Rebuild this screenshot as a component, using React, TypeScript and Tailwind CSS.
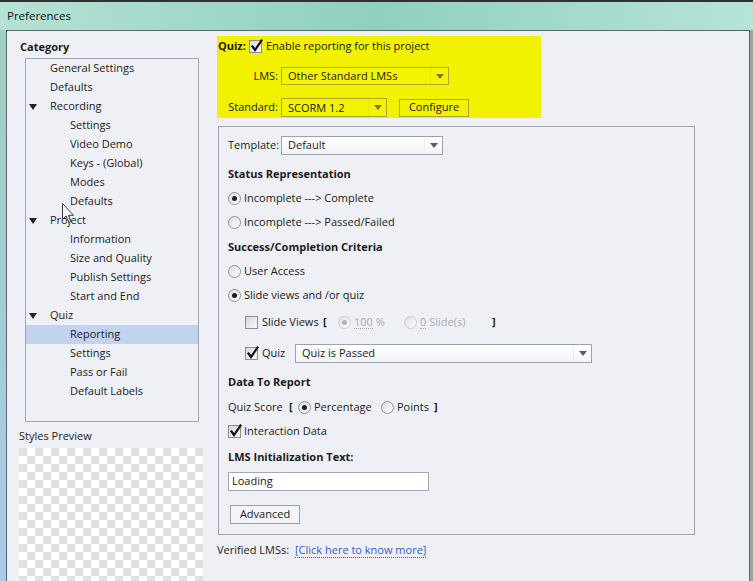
import React from "react";

function Radio({ checked = false, disabled = false }: { checked?: boolean; disabled?: boolean }) {
  return (
    <span
      className={
        "relative inline-flex w-[13px] h-[13px] shrink-0 items-center justify-center rounded-full border bg-gradient-to-br from-[#dcdde0] to-[#ffffff] " +
        (disabled ? "border-[#c9ccd2]" : "border-[#8c919b]")
      }
    >
      {checked && (
        <span className={"block w-[5px] h-[5px] rounded-full " + (disabled ? "bg-[#b3b5ba]" : "bg-[#1c1c1c]")} />
      )}
    </span>
  );
}

function Check({ checked = false }: { checked?: boolean }) {
  return (
    <span className="relative inline-block w-[13px] h-[13px] shrink-0 border border-[#8a8d94] bg-gradient-to-br from-[#d6d7da] to-[#fbfbfb]">
      {checked && (
        <svg className="absolute left-[0px] top-[-2px]" width="13" height="14" viewBox="0 0 13 14">
          <path d="M2.5 7.5 L5 11 L11.5 1.5" fill="none" stroke="#111" strokeWidth="2.2" strokeLinecap="square" />
        </svg>
      )}
    </span>
  );
}

function Arrow({ color = "#555" }: { color?: string }) {
  return (
    <svg width="8" height="5" viewBox="0 0 8 5">
      <path d="M0 0 H8 L4 5 Z" fill={color} />
    </svg>
  );
}

function Drop({ text, w, yellow = false, h = "h-[19px]" }: { text: string; w: string; yellow?: boolean; h?: string }) {
  return (
    <div
      className={
        "flex items-center border " +
        h +
        " " +
        w +
        (yellow
          ? " border-[#a9a92c] bg-[#f4f400]"
          : " border-[#9ba1ae] bg-gradient-to-b from-[#ffffff] to-[#f3f4f7]")
      }
    >
      <span className="flex-1 pl-[6px] whitespace-nowrap leading-[14px]">{text}</span>
      <span className={"h-full w-px " + (yellow ? "bg-[#e6e600]" : "bg-[#eceef2]")} />
      <span className="w-[17px] flex items-center justify-center">
        <Arrow color={yellow ? "#7a7a30" : "#5a5d66"} />
      </span>
    </div>
  );
}

function Tri() {
  return (
    <svg width="8" height="6" viewBox="0 0 8 6">
      <path d="M0 0 H8 L4 6 Z" fill="#222" />
    </svg>
  );
}

type TreeItem = { label: string; level: 1 | 2; open?: boolean; selected?: boolean };

const tree: TreeItem[] = [
  { label: "General Settings", level: 1 },
  { label: "Defaults", level: 1 },
  { label: "Recording", level: 1, open: true },
  { label: "Settings", level: 2 },
  { label: "Video Demo", level: 2 },
  { label: "Keys - (Global)", level: 2 },
  { label: "Modes", level: 2 },
  { label: "Defaults", level: 2 },
  { label: "Project", level: 1, open: true },
  { label: "Information", level: 2 },
  { label: "Size and Quality", level: 2 },
  { label: "Publish Settings", level: 2 },
  { label: "Start and End", level: 2 },
  { label: "Quiz", level: 1, open: true },
  { label: "Reporting", level: 2, selected: true },
  { label: "Settings", level: 2 },
  { label: "Pass or Fail", level: 2 },
  { label: "Default Labels", level: 2 },
];

export default function App() {
  return (
    <div className="relative w-[753px] h-[581px] overflow-hidden bg-[#9fd3c4] text-[11px] text-[#1b1b1b] font-['Open_Sans','Noto_Sans',sans-serif]">
      {/* title bar */}
      <div className="h-[2px] bg-[#2c3236]" />
      <div className="h-[28px] flex items-center pl-[7px] bg-gradient-to-r from-[#b5e2d4] via-[#8fd0bd] to-[#b6e4d8]">
        <span className="text-[11.5px] text-[#111] leading-none">Preferences</span>
      </div>

      <div className="flex h-[551px]">
        {/* left frame */}
        <div className="w-[6px] bg-gradient-to-b from-[#9fcfc0] to-[#a9cbe8]" />
        {/* content */}
        <div className="w-[744px] h-full border-l border-t border-r border-[#5b6570] bg-[#eef0f6] flex">
          {/* left column */}
          <div className="w-[210px] flex flex-col">
            <div className="mt-[8px] h-[16px] pl-[13px] flex items-center font-bold">Category</div>
            <div className="mt-[3px] ml-[18px] w-[174px] h-[364px] border border-[#a0a8b9]">
              {tree.map((t, i) => (
                <div
                  key={i}
                  className={"relative h-[19px] flex items-center " + (t.selected ? "bg-[#c1d3ef]" : "")}
                >
                  {t.open && (
                    <span className="absolute left-[3px] top-[7px]">
                      <Tri />
                    </span>
                  )}
                  <span className={t.level === 1 ? "pl-[24px]" : "pl-[44px]"}>{t.label}</span>
                </div>
              ))}
            </div>
            <div className="mt-[6px] h-[16px] pl-[12px] flex items-center">Styles Preview</div>
            <div className="mt-[4px] ml-[12px] w-[184px] flex-1 bg-[conic-gradient(#ffffff_0_25%,#e0e0e0_0_50%,#ffffff_0_75%,#e0e0e0_0)] bg-[length:16px_16px]" />
          </div>

          {/* right column */}
          <div className="flex flex-col">
            {/* yellow */}
            <div className="mt-[5px] w-[324px] h-[82px] bg-[#f2f200] flex flex-col">
              <div className="mt-[2px] h-[16px] flex items-center pl-[1px]">
                <span className="w-[31px] font-bold">Quiz:</span>
                <Check checked />
                <span className="ml-[4px]">Enable reporting for this project</span>
              </div>
              <div className="mt-[13px] h-[18px] flex items-center">
                <span className="w-[61px] text-right">LMS:</span>
                <span className="ml-[3px]">
                  <Drop text="Other Standard LMSs" w="w-[168px]" yellow h="h-[18px]" />
                </span>
              </div>
              <div className="mt-[13px] h-[19px] flex items-center">
                <span className="w-[61px] text-right">Standard:</span>
                <span className="ml-[3px]">
                  <Drop text="SCORM 1.2" w="w-[106px]" yellow h="h-[19px]" />
                </span>
                <span className="ml-[12px] w-[70px] h-[18px] border border-[#a9a92c] flex items-center justify-center">
                  Configure
                </span>
              </div>
            </div>

            {/* group box */}
            <div className="mt-[8px] ml-[1px] w-[477px] h-[409px] border border-[#9ba1ae] pl-[9px] flex flex-col">
              <div className="mt-[8px] h-[20px] flex items-center">
                <span className="w-[53px]">Template:</span>
                <Drop text="Default" w="w-[162px]" />
              </div>
              <div className="mt-[9px] h-[20px] flex items-center font-bold">Status Representation</div>
              <div className="mt-[4px] h-[20px] flex items-center gap-[3px]">
                <Radio checked />
                <span>Incomplete ---&gt; Complete</span>
              </div>
              <div className="mt-[4px] h-[20px] flex items-center gap-[3px]">
                <Radio />
                <span>Incomplete ---&gt; Passed/Failed</span>
              </div>
              <div className="mt-[5px] h-[20px] flex items-center font-bold">Success/Completion Criteria</div>
              <div className="mt-[4px] h-[20px] flex items-center gap-[3px]">
                <Radio />
                <span>User Access</span>
              </div>
              <div className="mt-[4px] h-[20px] flex items-center gap-[3px]">
                <Radio checked />
                <span>Slide views and /or quiz</span>
              </div>
              <div className="mt-[7px] h-[20px] flex items-center pl-[17px]">
                <Check />
                <span className="ml-[4px] w-[61px]">Slide Views</span>
                <span className="w-[15px] font-bold">[</span>
                <Radio checked disabled />
                <span className="ml-[3px] w-[50px] text-[#a9abb0]">
                  <span className="border-b border-dotted border-[#a9abb0] leading-[13px] inline-block">100</span> %
                </span>
                <Radio disabled />
                <span className="ml-[3px] w-[72px] text-[#a9abb0]">
                  <span className="border-b border-dotted border-[#a9abb0] leading-[13px] inline-block">0</span> Slide(s)
                </span>
                <span className="font-bold">]</span>
              </div>
              <div className="mt-[11px] h-[20px] flex items-center pl-[17px]">
                <Check checked />
                <span className="ml-[4px] w-[33px]">Quiz</span>
                <Drop text="Quiz is Passed" w="w-[297px]" />
              </div>
              <div className="mt-[9px] h-[20px] flex items-center font-bold">Data To Report</div>
              <div className="mt-[5px] h-[20px] flex items-center">
                <span className="w-[61px]">Quiz Score</span>
                <span className="w-[9px] font-bold">[</span>
                <Radio checked />
                <span className="ml-[3px] w-[67px]">Percentage</span>
                <Radio />
                <span className="ml-[3px] w-[37px]">Points</span>
                <span className="font-bold">]</span>
              </div>
              <div className="mt-[4px] h-[20px] flex items-center gap-[3px]">
                <Check checked />
                <span>Interaction Data</span>
              </div>
              <div className="mt-[6px] h-[20px] flex items-center font-bold">LMS Initialization Text:</div>
              <div className="mt-[5px] w-[201px] h-[19px] border border-[#a3a8b3] bg-white flex items-center pl-[3px]">
                Loading
              </div>
              <div className="mt-[14px] ml-[2px] w-[70px] h-[19px] border border-[#9da1aa] bg-[#f4f5f8] flex items-center justify-center">
                Advanced
              </div>
            </div>

            <div className="mt-[7px] h-[16px] flex items-center">
              <span className="w-[78px]">Verified LMSs:</span>
              <span className="text-[#2a63c4] border-b border-dotted border-[#2a63c4] leading-[14px]">
                [Click here to know more]
              </span>
            </div>
          </div>
        </div>
        {/* right frame */}
        <div className="w-[3px] bg-[#8fa9a0]" />
      </div>

      {/* mouse cursor */}
      <svg className="absolute left-[62px] top-[203px]" width="13" height="21" viewBox="0 0 13 21">
        <path
          d="M0.5 0.5 L0.5 16.5 L4.2 13 L6.8 19.5 L9 18.6 L6.5 12.3 L11.5 12.3 Z"
          fill="#ffffff"
          fillOpacity="0.6"
          stroke="#3a3a3a"
          strokeWidth="1"
          strokeLinejoin="round"
        />
      </svg>
    </div>
  );
}
